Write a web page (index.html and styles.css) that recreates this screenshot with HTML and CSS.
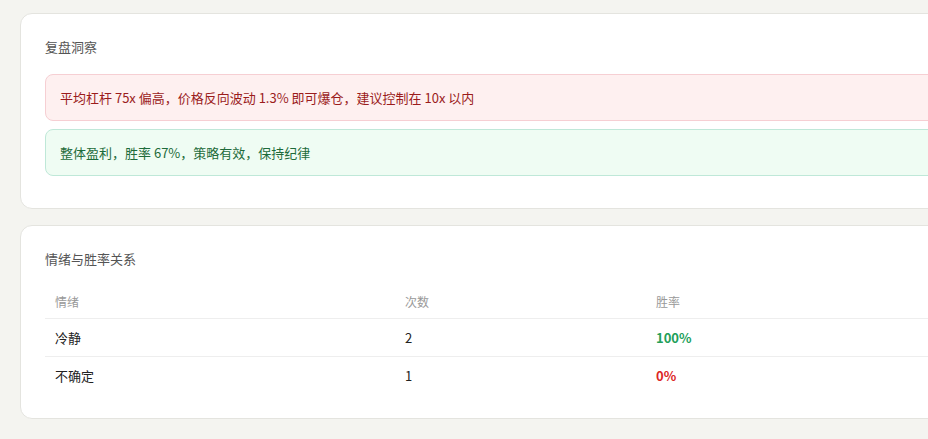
FILE: index.html
```html
<!DOCTYPE html>
<html lang="zh-CN">
<head>
    <meta charset="UTF-8">
    <meta name="viewport" content="width=device-width, initial-scale=1.0">
    <title>复盘</title>
    <link rel="stylesheet" href="styles.css">
</head>
<body>
    <div class="page">
        <!-- 复盘洞察 -->
        <div class="card">
            <h3 class="card-title">复盘洞察</h3>
            <div class="insight insight-bad">平均杠杆 75x 偏高，价格反向波动 1.3% 即可爆仓，建议控制在 10x 以内</div>
            <div class="insight insight-good">整体盈利，胜率 67%，策略有效，保持纪律</div>
        </div>

        <!-- 情绪与胜率关系 -->
        <div class="card">
            <h3 class="card-title">情绪与胜率关系</h3>
            <table class="mood-table">
                <thead>
                    <tr>
                        <th class="col-mood">情绪</th>
                        <th class="col-count">次数</th>
                        <th>胜率</th>
                    </tr>
                </thead>
                <tbody>
                    <tr>
                        <td>冷静</td>
                        <td>2</td>
                        <td class="rate-up">100%</td>
                    </tr>
                    <tr>
                        <td>不确定</td>
                        <td>1</td>
                        <td class="rate-down">0%</td>
                    </tr>
                </tbody>
            </table>
        </div>
    </div>
</body>
</html>
```

FILE: styles.css
```css
html, body {
    overflow: hidden;
}
body {
    font-family: "Noto Sans CJK SC", "Noto Sans", sans-serif;
    margin: 0;
    padding: 0;
    background-color: #f4f4f0;
    color: #222;
}
.page {
    width: 1100px;
    padding: 13px 0 0 20px;
    display: flex;
    flex-direction: column;
    gap: 16px;
}
.card {
    background-color: #fff;
    border: 1px solid #e4e4df;
    border-radius: 12px;
    padding: 24px;
}
.card-title {
    margin: 0 0 18px;
    font-size: 13px;
    font-weight: 400;
    line-height: 18px;
    color: #555;
}
.insight {
    font-size: 13px;
    line-height: 18px;
    padding: 14px 14px 13px;
    border-radius: 8px;
    border: 1px solid;
    margin-bottom: 8px;
}
.insight-bad {
    background-color: #fef0f0;
    border-color: #f6cfd3;
    color: #9b1c1c;
}
.insight-good {
    background-color: #effcf3;
    border-color: #bfe8d8;
    color: #1d6b3a;
}
.mood-table {
    width: 100%;
    border-collapse: collapse;
    font-size: 13px;
}
.mood-table th {
    text-align: left;
    font-weight: 400;
    font-size: 12px;
    line-height: 16px;
    color: #999;
    padding: 8px 10px;
    border-bottom: 1px solid #eee;
}
.mood-table td {
    padding: 10px 10px 9px;
    line-height: 18px;
    color: #222;
    border-bottom: 1px solid #eee;
}
.mood-table tbody tr:last-child td {
    border-bottom: none;
}
.col-mood {
    width: 330px;
}
.col-count {
    width: 231px;
}
.rate-up {
    color: #22a05a !important;
    font-weight: 600;
}
.rate-down {
    color: #dc2626 !important;
    font-weight: 600;
}
```
